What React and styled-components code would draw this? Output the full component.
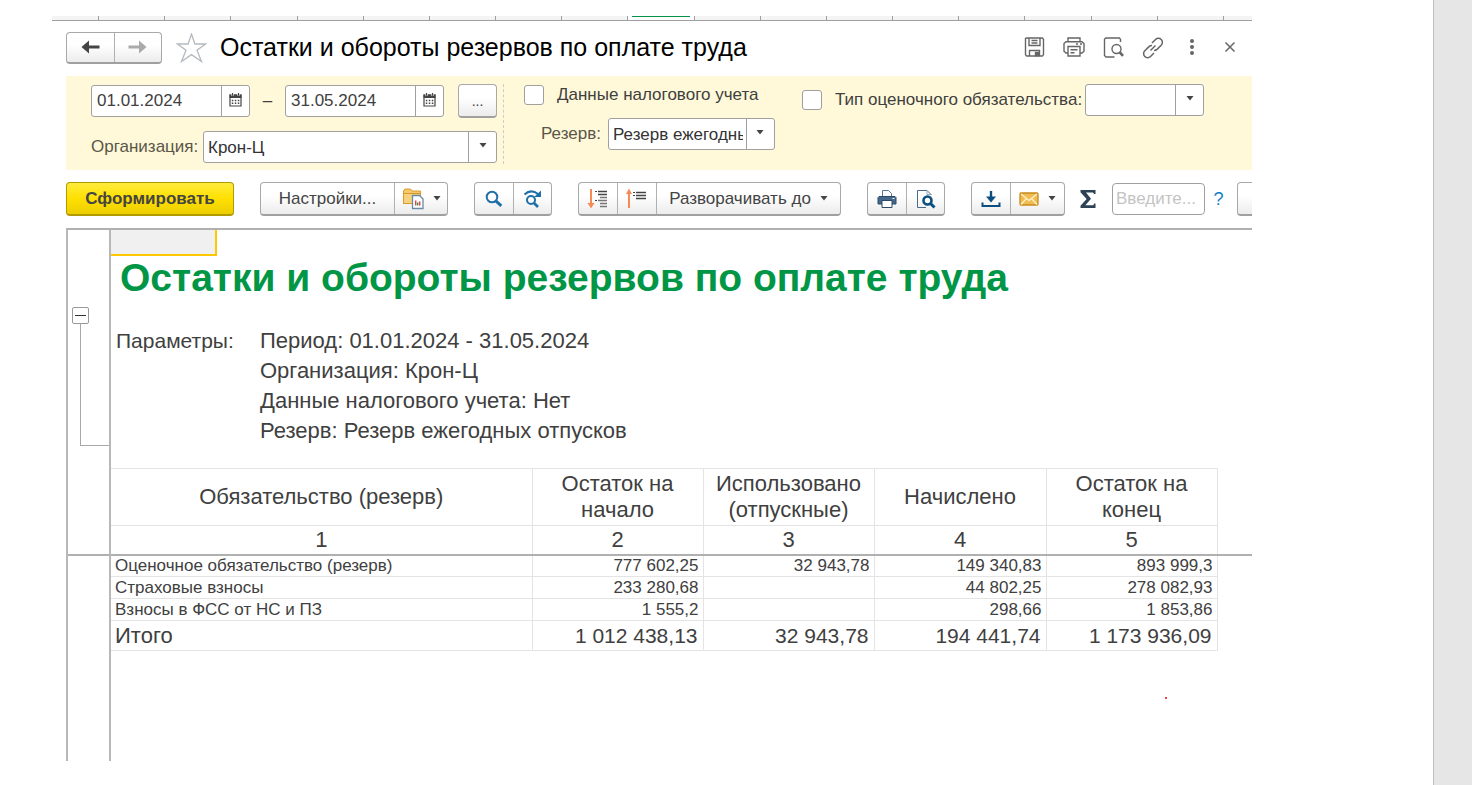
import React from 'react'
import styled, { createGlobalStyle, css } from 'styled-components'

const GlobalStyle = createGlobalStyle`
  * {
    box-sizing: border-box;
  }

  body {
    margin: 0;
    background: #fff;
    color: #404040;
    font-family: "Liberation Sans", Arial, sans-serif;
    font-size: 17px;
  }

  button, input, select {
    font: inherit;
    color: inherit;
  }
`

const Page = styled.div`
  display: flex;
  min-height: 100vh;
`

const Main = styled.main`
  flex: 1;
  min-width: 0;
  display: flex;
  flex-direction: column;
  padding: 16px 181px 24px 52px;
`

const Rail = styled.aside`
  width: 39px;
  background: #e6e6e6;
  border-left: 1px solid #c0c0c0;
`

const Tabs = styled.div`
  display: flex;
  height: 5px;
  background: #f4f4f4;
  border-bottom: 1px solid #a0a0a0;
`

const Tab = styled.div`
  flex: ${props => (props.$width ? `0 0 ${props.$width}px` : '1')};
  border-right: ${props => (props.$last ? '0' : '1px solid #a0a0a0')};
  padding: 0 4px;
  background: ${props => (props.$active ? '#fff' : 'none')};

  &::before {
    content: '';
    display: ${props => (props.$active ? 'block' : 'none')};
    height: 1px;
    background: #009646;
  }
`

const Form = styled.div`
  flex: 1;
  display: flex;
  flex-direction: column;
  padding-left: 14px;
  overflow: hidden;
`

const Header = styled.header`
  display: flex;
  align-items: center;
  height: 55px;
  padding: 0 12px 2px 0;
`

const ButtonGroup = styled.div`
  display: flex;
  flex: none;
  border: 1px solid #a8a8a8;
  border-bottom: 2px solid #a0a0a0;
  border-radius: 4px;
  background: linear-gradient(#fff 40%, #ececec);
`

const GroupButton = styled.button`
  display: flex;
  align-items: center;
  justify-content: center;
  gap: 9px;
  width: ${props => props.$width}px;
  height: ${props => props.$height || 31}px;
  padding: 0;
  border: 0;
  background: none;
  color: #444;

  & + & {
    border-left: 1px solid #b0b0b0;
  }
`

const StarButton = styled.button`
  display: flex;
  margin: 0 13px 0 14px;
  padding: 0;
  border: 0;
  background: none;
`

const Title = styled.h1`
  flex: 1;
  margin: 0;
  color: #000;
  font-size: 25px;
  font-weight: 400;
  white-space: nowrap;
`

const HeaderActions = styled.div`
  display: flex;
  gap: 18px;
`

const IconButton = styled.button`
  display: flex;
  padding: 0;
  border: 0;
  background: none;
  color: #666;
`

const Filters = styled.section`
  display: flex;
  align-items: flex-start;
  height: 94px;
  padding: 8px 0 6px 25px;
  background: #fff9d9;
`

const FilterColumn = styled.div`
  display: flex;
  flex-direction: column;
  flex: none;
  gap: ${props => props.$gap || 0}px;
`

const PeriodColumn = styled(FilterColumn)`
  padding-right: 6px;
  height: 80px;
  border-right: 1px dashed #ccc;
`

const ReserveColumn = styled(FilterColumn)`
  padding: 1px 27px 0 20px;
`

const FilterRow = styled.div`
  display: flex;
  align-items: center;
  gap: ${props => props.$gap || 0}px;
  padding-left: ${props => props.$indent || 0}px;
`

const Field = styled.div`
  display: flex;
  width: ${props => props.$width}px;
  height: 32px;
  border: 1px solid #a0a0a0;
  border-radius: 3px;
  background: #fff;
  overflow: hidden;
`

const TextInput = styled.input`
  flex: 1;
  min-width: 0;
  padding: 0 5px;
  border: 0;
  background: none;
  outline: 0;
`

const FieldButton = styled.button`
  display: flex;
  align-items: center;
  justify-content: center;
  width: 28px;
  padding: 0 0 3px;
  border: 0;
  border-left: 1px solid #a0a0a0;
  background: none;
`

const Dash = styled.span`
  width: 35px;
  text-align: center;
`

const DotsButton = styled.button`
  width: 39px;
  height: 34px;
  margin-left: 14px;
  padding: 0;
  border: 1px solid #a8a8a8;
  border-bottom: 2px solid #a0a0a0;
  border-radius: 4px;
  background: linear-gradient(#fff 40%, #ececec);
  font-size: 14px;
`

const Label = styled.label`
  color: ${props => (props.$strong ? '#404040' : '#5a5648')};
  white-space: nowrap;
`

const OrgLabel = styled(Label)`
  width: 112px;
`

const SelectBox = styled.div`
  display: grid;
  grid-template-columns: 1fr 28px;
  width: ${props => props.$width}px;
  height: 32px;
  border: 1px solid #a0a0a0;
  border-radius: 3px;
  background: #fff;
`

const NativeSelect = styled.select`
  grid-area: 1 / 1 / 2 / 3;
  min-width: 0;
  width: 100%;
  padding: 0 31px 0 4px;
  border: 0;
  background: none;
  appearance: none;
  outline: 0;
  color: #333;
`

const SelectArrow = styled.span`
  grid-area: 1 / 2 / 2 / 3;
  display: flex;
  align-items: center;
  justify-content: center;
  padding-bottom: 3px;
  border-left: 1px solid #a0a0a0;
  pointer-events: none;
`

const Checkbox = styled.input`
  width: 20px;
  height: 20px;
  margin: 0;
  border: 1px solid #a0a0a0;
  border-radius: 3px;
  background: #fff;
  appearance: none;
`

const Toolbar = styled.div`
  display: flex;
  align-items: center;
  gap: 26px;
  height: 58px;
`

const PrimaryButton = styled.button`
  flex: none;
  width: 168px;
  height: 34px;
  border: 1px solid #b09a00;
  border-bottom-width: 2px;
  border-radius: 4px;
  background: linear-gradient(#ffec3d, #ffe000 50%, #ecce00);
  color: #444;
  font-weight: 700;
`

const ToolbarEnd = styled.div`
  display: flex;
  align-items: center;
  flex: none;
  margin-left: -11px;
`

const SearchInput = styled.input`
  width: 93px;
  height: 32px;
  margin: 0 8px 0 16px;
  padding: 0 3px;
  border: 1px solid #a0a0a0;
  border-radius: 4px;
  background: #fff;

  &::placeholder {
    color: #c4c4c4;
    opacity: 1;
  }
`

const HelpButton = styled.button`
  width: 11px;
  margin-right: 13px;
  padding: 0;
  border: 0;
  background: none;
  color: #0f7fc8;
  font-size: 18px;
`

const Sheet = styled.section`
  flex: 1;
  display: flex;
  border-top: 2px solid #b0b0b0;
  border-left: 2px solid #b8b8b8;
`

const Gutter = styled.div`
  flex: none;
  width: 43px;
  border-right: 2px solid #b8b8b8;
`

const GutterHead = styled.div`
  height: 326px;
  padding: 77px 0 0 4px;
  border-bottom: 2px solid #b0b0b0;
`

const CollapseButton = styled.button`
  display: flex;
  align-items: center;
  justify-content: center;
  width: 17px;
  height: 17px;
  padding: 0;
  border: 1px solid #999;
  border-radius: 2px;
  background: #fff;
`

const Bracket = styled.div`
  height: 122px;
  margin-left: 8px;
  border-left: 1px solid #a8a8a8;
  border-bottom: 1px solid #a8a8a8;
`

const SheetBody = styled.div`
  flex: 1;
  min-width: 0;
`

const ActiveCell = styled.div`
  width: 106px;
  height: 26px;
  border-right: 2px solid #ffc800;
  border-bottom: 2px solid #ffc800;
  background: #f0f0f0;
`

const ReportTitle = styled.h2`
  margin: 0;
  padding-left: 9px;
  color: #009646;
  font-size: 39px;
  line-height: 44px;
  white-space: nowrap;
`

const Params = styled.dl`
  display: grid;
  grid-template-columns: 144px 1fr;
  margin: 26px 0 22px;
  padding-left: 5px;
  line-height: 30px;
`

const Term = styled.dt`
  grid-column: 1;
  font-size: 21px;
`

const Value = styled.dd`
  grid-column: 2;
  margin: 0;
  font-size: 22px;
`

const Table = styled.table`
  width: 100%;
  border-collapse: collapse;
  table-layout: fixed;
`

const cell = css`
  padding: 0 4px;
  border: 1px solid #e4e4e4;
  font-weight: 400;
  text-align: ${props => props.$align || 'center'};

  &:first-child {
    border-left: 0;
  }
`

const HeadCell = styled.th`
  ${cell}
  height: ${props => props.$height}px;
  font-size: 22px;
  line-height: 26px;
`

const RowHead = styled.th`
  ${cell}
  height: ${props => (props.$total ? 30 : 22)}px;
  font-size: ${props => (props.$total ? 22 : 17)}px;
  line-height: 20px;
`

const Cell = styled.td`
  ${cell}
  padding-right: ${props => (props.$total ? 5 : 4)}px;
  font-size: ${props => (props.$total ? 21 : 17)}px;
  line-height: 20px;
`

const HeadRow = styled.tr`
  border-bottom: ${props => (props.$frozen ? '2px solid #b0b0b0' : '0')};

  th {
    border-bottom: ${props => (props.$frozen ? '2px solid #b0b0b0' : '1px solid #e4e4e4')};
  }
`

const Spare = styled.td`
  padding: 0;
  border: 0;
`

const Mark = styled.div`
  width: 2px;
  height: 2px;
  margin: 46px 85px 0 auto;
  background: #f04050;
`

const Arrow = () => (
  <svg width="8" height="5" viewBox="0 0 8 5" fill="#444"><path d="M0.5 0h7L4 4.5z" /></svg>
)

const BackIcon = ({ color, flip }) => (
  <svg width="20" height="14" viewBox="0 0 20 14" fill={color}>
    <path
      d="M0.5 7L8 0.5V5.6H18.5V8.4H8V13.5z"
      transform={flip ? 'matrix(-1 0 0 1 19 0)' : undefined}
    />
  </svg>
)

const StarIcon = () => (
  <svg width="31" height="30" viewBox="0 0 31 30" fill="#fff" stroke="#b4bac0" strokeWidth="1.3">
    <path d="M15.5 1L18.9 11H29.5L21 17.3L25.5 28.5L15.5 21.6L5.5 28.5L10 17.3L1.5 11H12.1z" />
  </svg>
)

const SaveIcon = () => (
  <svg width="21" height="20" viewBox="0 0 21 20" fill="none" stroke="#666" strokeWidth="1.4">
    <path d="M2.5 1h15.8l1.2 1.2V17.8l-1.2 1.2H2.7L1.5 17.8V1.5z" />
    <path d="M5 1v7.5h11V1M7.5 3.5h6M7.5 6h6M5.5 19v-5.5h10V19" />
    <path d="M11.5 15.5h3V18.5h-3z" fill="#666" />
  </svg>
)

const PrintIcon = () => (
  <svg width="22" height="20" viewBox="0 0 22 20" fill="none" stroke="#666" strokeWidth="1.4">
    <path d="M5 4.5V1h12v3.5M5 16H3L1 14.2V6.5L3 4.7h16l2 1.8v7.7L19 16h-2" />
    <path d="M5 9.5h12V19H5zM7.5 12.8h7M7.5 15.8h4M13 7h2M17 7h2" />
  </svg>
)

const PreviewIcon = () => (
  <svg width="21" height="21" viewBox="0 0 21 21" fill="none" stroke="#666" strokeWidth="1.4">
    <path d="M17.5 5V2.2L16.3 1H2.7L1.5 2.2v16.3L3 20h8.5" />
    <circle cx="13.5" cy="12" r="4.5" />
    <path d="M16.5 15L20 18.8" strokeWidth="2.6" />
  </svg>
)

const LinkIcon = () => (
  <svg width="22" height="22" viewBox="0 0 22 22" fill="none" stroke="#666" strokeWidth="1.5">
    <path d="M10 6L13.5 2.5a4 4 0 0 1 5.7 0a4 4 0 0 1 0 5.7L15 12.4a4 4 0 0 1-3 1" />
    <path d="M12 16L8.5 19.5a4 4 0 0 1-5.7 0a4 4 0 0 1 0-5.7L7 9.6a4 4 0 0 1 3-1" />
    <path d="M8.5 13.5l5-5" />
  </svg>
)

const MoreIcon = () => (
  <svg width="20" height="20" viewBox="0 0 20 20" fill="#666">
    <circle cx="10" cy="4" r="2" />
    <circle cx="10" cy="10" r="2" />
    <circle cx="10" cy="16" r="2" />
  </svg>
)

const CloseIcon = () => (
  <svg width="20" height="20" viewBox="0 0 20 20" stroke="#666" strokeWidth="1.5">
    <path d="M5.5 5.5l9 9M14.5 5.5l-9 9" />
  </svg>
)

const CalendarIcon = () => (
  <svg width="13" height="14" viewBox="0 0 13 14">
    <path d="M1 2h11V13H1z" fill="#fff" stroke="#444" strokeWidth="1.2" />
    <path d="M.5 1.5h12v3.5H.5z" fill="#444" />
    <path d="M3.5 0v2.8M9.5 0v2.8" stroke="#fff" strokeWidth="2.4" />
    <path d="M3.5 0v2.8M9.5 0v2.8" stroke="#444" strokeWidth="1.2" />
    <path d="M2.8 7.5h7.5M2.8 10.3h7.5" stroke="#444" strokeWidth="1.5" strokeDasharray="1.5 1.5" />
  </svg>
)

const FolderIcon = () => (
  <svg width="22" height="22" viewBox="0 0 22 22">
    <path d="M1.5 3L3 1h5.5L10 3H18.5v4.5H4L1.5 15.5z" fill="#f3c96b" stroke="#d79a2b" />
    <path d="M1.5 5.5h17v10h-17z" fill="#f6d27e" stroke="#d79a2b" />
    <path d="M10.5 7.5h7l3.5 3.5v9.5H10.5z" fill="#fff" stroke="#6a8aa5" strokeWidth="1.3" />
    <path d="M13.7 17.5v-5M17.7 17.5v-4" stroke="#e54545" strokeWidth="1.5" />
    <path d="M15.7 17.5v-3" stroke="#2a9d5c" strokeWidth="1.5" />
  </svg>
)

const SearchIcon = () => (
  <svg width="18" height="18" viewBox="0 0 18 18" fill="none" stroke="#1f6fa8">
    <circle cx="7" cy="7" r="5.3" strokeWidth="2" />
    <path d="M10.8 10.8l5.5 5" strokeWidth="3" />
  </svg>
)

const SearchNextIcon = () => (
  <svg width="20" height="20" viewBox="0 0 20 20" fill="none" stroke="#1f6fa8">
    <circle cx="8" cy="11" r="4" strokeWidth="2" />
    <path d="M11 14l4 4" strokeWidth="2.6" />
    <path d="M1.5 5.5Q8 -.5 15 5" strokeWidth="2" />
    <path d="M18 1.5V8H11z" fill="#1f6fa8" stroke="none" />
  </svg>
)

const ExpandIcon = () => (
  <svg width="22" height="22" viewBox="0 0 22 22" fill="none">
    <path d="M4 1v16" stroke="#f58a55" strokeWidth="2" />
    <path d="M.5 15h7L4 20.5z" fill="#f58a55" />
    <path d="M8 3.5h2M8 12.5h2" stroke="#444" />
    <path d="M11 3.5h9M11 6.5h9" stroke="#444" strokeWidth="1.5" />
    <path d="M13 9.5h7M11 12.5h9M13 15.5h7M13 18.5h7" stroke="#777" strokeWidth="1.3" />
  </svg>
)

const CollapseIcon = () => (
  <svg width="22" height="22" viewBox="0 0 22 22" fill="none">
    <path d="M3 20V4" stroke="#f58a55" strokeWidth="2" />
    <path d="M0 6h6L3 .5z" fill="#f58a55" />
    <path d="M7 4.5h2M7 7.5h2" stroke="#444" />
    <path d="M10 4.5h10M10 7.5h10M10 10.5h10" stroke="#444" strokeWidth="1.5" />
  </svg>
)

const PrinterIcon = () => (
  <svg width="20" height="20" viewBox="0 0 20 20">
    <path d="M5.5 8V1.5h6L14.5 4.5V8" fill="#fff" stroke="#5a7794" />
    <path d="M2 7.5h16l1 1V15H1V8.5z" fill="#46688a" stroke="#2c4a68" />
    <path d="M5 11.5h10V18.5H5z" fill="#fff" stroke="#2c4a68" />
    <path d="M15.5 9.5h2" stroke="#fff" />
  </svg>
)

const SheetPreviewIcon = () => (
  <svg width="20" height="20" viewBox="0 0 20 20" fill="none">
    <path d="M10 18.5H1.5V1.5H11L15.5 6" stroke="#4a6b8a" />
    <path d="M11 1.5V5.5h4.5" stroke="#9ab" />
    <circle cx="11.5" cy="11.5" r="4" fill="#fff" stroke="#0b4f80" strokeWidth="2.6" />
    <path d="M14.5 14.5l4 4" stroke="#0b4f80" strokeWidth="3" />
  </svg>
)

const DownloadIcon = () => (
  <svg width="20" height="18" viewBox="0 0 20 18" fill="none" stroke="#0b4f80">
    <path d="M10 1v8" strokeWidth="2.4" />
    <path d="M5 6.5h10L10 12.5z" fill="#0b4f80" stroke="none" />
    <path d="M1.5 12.5V16H18.5V12.5" strokeWidth="2" />
  </svg>
)

const MailIcon = () => (
  <svg width="20" height="14" viewBox="0 0 20 14">
    <rect x="1" y="1" width="18" height="12" rx="1" fill="#f0bd55" stroke="#c98a1b" strokeWidth="1.3" />
    <path d="M2 2l8 6.5L18 2M2 12.5l5.5-6M18 12.5l-5.5-6" fill="none" stroke="#fff3cf" strokeWidth="1.2" />
  </svg>
)

const SigmaIcon = () => (
  <svg width="16" height="20" viewBox="0 0 16 20" fill="#2d4355">
    <path d="M.5 1h15v4h-1.5L13 3.6H6L11 9.8L5.4 16.2H13.3L14.2 14.5H15.5V19H.5V16.8L6.600 10L.5 3.200z" />
  </svg>
)

const Select = ({ id, label, width, value }) => (
  <SelectBox $width={width}>
    <NativeSelect id={id} aria-label={label} defaultValue={value}>
      <option>{value}</option>
    </NativeSelect>
    <SelectArrow><Arrow /></SelectArrow>
  </SelectBox>
)

const DateField = ({ label, value }) => (
  <Field $width={159}>
    <TextInput aria-label={label} defaultValue={value} />
    <FieldButton aria-label="Календарь"><CalendarIcon /></FieldButton>
  </Field>
)

const headerActions = [
  ['Сохранить', SaveIcon],
  ['Печать', PrintIcon],
  ['Просмотр', PreviewIcon],
  ['Ссылка', LinkIcon],
  ['Ещё', MoreIcon],
  ['Закрыть', CloseIcon]
]

const params = [
  'Период: 01.01.2024 - 31.05.2024',
  'Организация: Крон-Ц',
  'Данные налогового учета: Нет',
  'Резерв: Резерв ежегодных отпусков'
]

const columns = [
  'Обязательство (резерв)',
  'Остаток на начало',
  'Использовано (отпускные)',
  'Начислено',
  'Остаток на конец'
]

const rows = [
  { name: 'Оценочное обязательство (резерв)', values: ['777 602,25', '32 943,78', '149 340,83', '893 999,3'] },
  { name: 'Страховые взносы', values: ['233 280,68', '', '44 802,25', '278 082,93'] },
  { name: 'Взносы в ФСС от НС и ПЗ', values: ['1 555,2', '', '298,66', '1 853,86'] },
  { name: 'Итого', values: ['1 012 438,13', '32 943,78', '194 441,74', '1 173 936,09'], total: true }
]

const FormHeader = () => (
  <Header>
    <ButtonGroup>
      <GroupButton $width={47} $height={29} aria-label="Назад"><BackIcon color="#444" /></GroupButton>
      <GroupButton $width={47} $height={29} aria-label="Вперед"><BackIcon color="#aaa" flip /></GroupButton>
    </ButtonGroup>
    <StarButton aria-label="Избранное"><StarIcon /></StarButton>
    <Title>Остатки и обороты резервов по оплате труда</Title>
    <HeaderActions>
      {headerActions.map(([name, Icon]) => (
        <IconButton key={name} aria-label={name}><Icon /></IconButton>
      ))}
    </HeaderActions>
  </Header>
)

const FilterPanel = () => (
  <Filters>
    <PeriodColumn $gap={13}>
      <FilterRow>
        <DateField label="Начало периода" value="01.01.2024" />
        <Dash>–</Dash>
        <DateField label="Конец периода" value="31.05.2024" />
        <DotsButton>...</DotsButton>
      </FilterRow>
      <FilterRow>
        <OrgLabel htmlFor="org">Организация:</OrgLabel>
        <Select id="org" width={294} value="Крон-Ц" />
      </FilterRow>
    </PeriodColumn>
    <ReserveColumn $gap={13}>
      <FilterRow $gap={13}>
        <Checkbox type="checkbox" id="tax" />
        <Label $strong htmlFor="tax">Данные налогового учета</Label>
      </FilterRow>
      <FilterRow $gap={7} $indent={17}>
        <Label htmlFor="reserve">Резерв:</Label>
        <Select id="reserve" width={167} value="Резерв ежегодных отпусков" />
      </FilterRow>
    </ReserveColumn>
    <FilterColumn>
      <FilterRow $gap={13}>
        <Checkbox type="checkbox" id="kind" />
        <FilterRow $gap={3}>
          <Label $strong htmlFor="kind">Тип оценочного обязательства:</Label>
          <Select label="Тип оценочного обязательства" width={119} value="" />
        </FilterRow>
      </FilterRow>
    </FilterColumn>
  </Filters>
)

const ReportToolbar = () => (
  <Toolbar>
    <PrimaryButton>Сформировать</PrimaryButton>
    <ButtonGroup>
      <GroupButton $width={133}>Настройки...</GroupButton>
      <GroupButton $width={53} aria-label="Варианты"><FolderIcon /><Arrow /></GroupButton>
    </ButtonGroup>
    <ButtonGroup>
      <GroupButton $width={38} aria-label="Найти"><SearchIcon /></GroupButton>
      <GroupButton $width={38} aria-label="Найти далее"><SearchNextIcon /></GroupButton>
    </ButtonGroup>
    <ButtonGroup>
      <GroupButton $width={38} aria-label="Развернуть"><ExpandIcon /></GroupButton>
      <GroupButton $width={39} aria-label="Свернуть"><CollapseIcon /></GroupButton>
      <GroupButton $width={184}>Разворачивать до<Arrow /></GroupButton>
    </ButtonGroup>
    <ButtonGroup>
      <GroupButton $width={38} aria-label="Печать"><PrinterIcon /></GroupButton>
      <GroupButton $width={38} aria-label="Просмотр"><SheetPreviewIcon /></GroupButton>
    </ButtonGroup>
    <ButtonGroup>
      <GroupButton $width={38} aria-label="Сохранить"><DownloadIcon /></GroupButton>
      <GroupButton $width={54} aria-label="Отправить"><MailIcon /><Arrow /></GroupButton>
    </ButtonGroup>
    <ToolbarEnd>
      <IconButton aria-label="Сумма"><SigmaIcon /></IconButton>
      <SearchInput aria-label="Поиск" placeholder="Введите..." />
      <HelpButton>?</HelpButton>
      <ButtonGroup><GroupButton $width={60} aria-label="Еще" /></ButtonGroup>
    </ToolbarEnd>
  </Toolbar>
)

const ReportTable = () => (
  <Table>
    <colgroup>
      <col />
      <col width="171" />
      <col width="171" />
      <col width="172" />
      <col width="171" />
      <col width="35" />
    </colgroup>
    <thead>
      <HeadRow>
        {columns.map(name => <HeadCell key={name} $height={57}>{name}</HeadCell>)}
        <Spare />
      </HeadRow>
      <HeadRow $frozen>
        {columns.map((name, i) => <HeadCell key={name} $height={29}>{i + 1}</HeadCell>)}
        <Spare />
      </HeadRow>
    </thead>
    <tbody>
      {rows.map(row => (
        <tr key={row.name}>
          <RowHead scope="row" $align="left" $total={row.total}>{row.name}</RowHead>
          {row.values.map((value, i) => (
            <Cell key={i} $align="right" $total={row.total}>{value}</Cell>
          ))}
          <Spare />
        </tr>
      ))}
    </tbody>
  </Table>
)

export default function App() {
  return (
    <Page>
      <GlobalStyle />
      <Main>
        <Tabs>
          <Tab $width={47} />
          {Array.from({ length: 17 }, (_, i) => <Tab key={i} $active={i === 8} />)}
          <Tab $width={28} $last />
        </Tabs>
        <Form>
          <FormHeader />
          <FilterPanel />
          <ReportToolbar />
          <Sheet>
            <Gutter>
              <GutterHead>
                <CollapseButton aria-label="Свернуть группу">
                  <svg width="11" height="1"><path d="M0 .5h11" stroke="#333" /></svg>
                </CollapseButton>
                <Bracket />
              </GutterHead>
            </Gutter>
            <SheetBody>
              <ActiveCell />
              <ReportTitle>Остатки и обороты резервов по оплате труда</ReportTitle>
              <Params>
                <Term>Параметры:</Term>
                {params.map(text => <Value key={text}>{text}</Value>)}
              </Params>
              <ReportTable />
              <Mark />
            </SheetBody>
          </Sheet>
        </Form>
      </Main>
      <Rail />
    </Page>
  )
}
